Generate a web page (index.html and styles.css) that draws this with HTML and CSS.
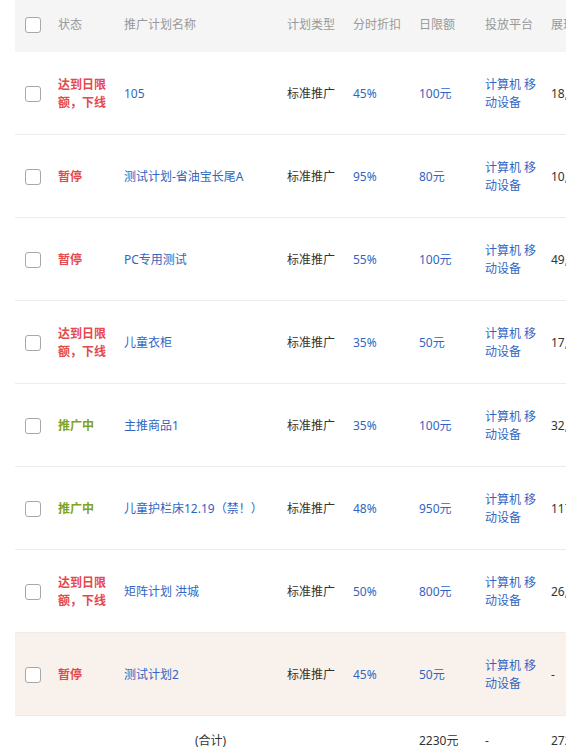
FILE: index.html
```html
<!DOCTYPE html>
<html lang="zh-CN">
<head>
<meta charset="utf-8">
<title>推广计划</title>
<link rel="stylesheet" href="styles.css">
</head>
<body>
<table class="plan-table">
  <colgroup>
    <col class="c-check"><col class="c-status"><col class="c-name"><col class="c-type"><col class="c-disc"><col class="c-limit"><col class="c-plat"><col class="c-imp">
  </colgroup>
  <thead>
    <tr class="head-row">
      <th><span class="checkbox"></span></th>
      <th>状态</th>
      <th>推广计划名称</th>
      <th>计划类型</th>
      <th>分时折扣</th>
      <th>日限额</th>
      <th>投放平台</th>
      <th>展现量</th>
    </tr>
  </thead>
  <tbody>
    <tr>
      <td><span class="checkbox"></span></td>
      <td class="st st-red">达到日限额，下线</td>
      <td class="link">105</td>
      <td>标准推广</td>
      <td class="link">45%</td>
      <td class="link">100元</td>
      <td class="link">计算机 移动设备</td>
      <td>18,356</td>
    </tr>
    <tr>
      <td><span class="checkbox"></span></td>
      <td class="st st-red">暂停</td>
      <td class="link">测试计划-省油宝长尾A</td>
      <td>标准推广</td>
      <td class="link">95%</td>
      <td class="link">80元</td>
      <td class="link">计算机 移动设备</td>
      <td>10,482</td>
    </tr>
    <tr>
      <td><span class="checkbox"></span></td>
      <td class="st st-red">暂停</td>
      <td class="link">PC专用测试</td>
      <td>标准推广</td>
      <td class="link">55%</td>
      <td class="link">100元</td>
      <td class="link">计算机 移动设备</td>
      <td>49,127</td>
    </tr>
    <tr>
      <td><span class="checkbox"></span></td>
      <td class="st st-red">达到日限额，下线</td>
      <td class="link">儿童衣柜</td>
      <td>标准推广</td>
      <td class="link">35%</td>
      <td class="link">50元</td>
      <td class="link">计算机 移动设备</td>
      <td>17,903</td>
    </tr>
    <tr>
      <td><span class="checkbox"></span></td>
      <td class="st st-green">推广中</td>
      <td class="link">主推商品1</td>
      <td>标准推广</td>
      <td class="link">35%</td>
      <td class="link">100元</td>
      <td class="link">计算机 移动设备</td>
      <td>32,615</td>
    </tr>
    <tr>
      <td><span class="checkbox"></span></td>
      <td class="st st-green">推广中</td>
      <td class="link">儿童护栏床12.19（禁！）</td>
      <td>标准推广</td>
      <td class="link">48%</td>
      <td class="link">950元</td>
      <td class="link">计算机 移动设备</td>
      <td>117,240</td>
    </tr>
    <tr>
      <td><span class="checkbox"></span></td>
      <td class="st st-red">达到日限额，下线</td>
      <td class="link">矩阵计划 洪城</td>
      <td>标准推广</td>
      <td class="link">50%</td>
      <td class="link">800元</td>
      <td class="link">计算机 移动设备</td>
      <td>26,574</td>
    </tr>
    <tr class="hl">
      <td><span class="checkbox"></span></td>
      <td class="st st-red">暂停</td>
      <td class="link">测试计划2</td>
      <td>标准推广</td>
      <td class="link">45%</td>
      <td class="link">50元</td>
      <td class="link">计算机 移动设备</td>
      <td>-</td>
    </tr>
  </tbody>
  <tfoot>
    <tr class="foot-row">
      <td></td>
      <td></td>
      <td class="total-label">(合计)</td>
      <td></td>
      <td></td>
      <td>2230元</td>
      <td>-</td>
      <td>272,313</td>
    </tr>
  </tfoot>
</table>
</body>
</html>
```
FILE: styles.css
```css
html, body {
  margin: 0;
  padding: 0;
  background: #fff;
  overflow: hidden;
}
body {
  width: 566px;
  height: 753px;
  font-family: "Noto Sans", "Noto Sans CJK SC", sans-serif;
  font-size: 12px;
  color: #333;
}
.plan-table {
  margin-left: 15px;
  width: 606px;
  table-layout: fixed;
  border-collapse: separate;
  border-spacing: 0;
}
.c-check { width: 33px; }
.c-status { width: 66px; }
.c-name { width: 163px; }
.c-type { width: 66px; }
.c-disc { width: 66px; }
.c-limit { width: 66px; }
.c-plat { width: 66px; }
.c-imp { width: 80px; }

th, td {
  box-sizing: border-box;
  padding: 0 2px 0 10px;
  text-align: left;
  vertical-align: middle;
  line-height: 18px;
  white-space: normal;
  word-break: break-all;
  overflow: hidden;
}
.head-row th {
  height: 52px;
  padding-bottom: 2px;
  background: #f5f5f5;
  font-weight: normal;
  color: #999;
  white-space: nowrap;
}
tbody td {
  height: 83px;
  padding-top: 2px;
  border-bottom: 1px solid #ececec;
}
tbody tr.hl td {
  background: #f9f2ec;
}
.checkbox {
  display: block;
  width: 16px;
  height: 16px;
  box-sizing: border-box;
  border: 1px solid #a8a8a8;
  border-radius: 3px;
  background: #fff;
}
.st { font-weight: bold; }
.st-red { color: #e5484d; }
.st-green { color: #80a41a; }
.link { color: #3165c3; }
.foot-row td {
  height: 48px;
  padding-top: 2px;
  color: #333;
  white-space: nowrap;
}
.total-label {
  padding-left: 81px;
}
```
